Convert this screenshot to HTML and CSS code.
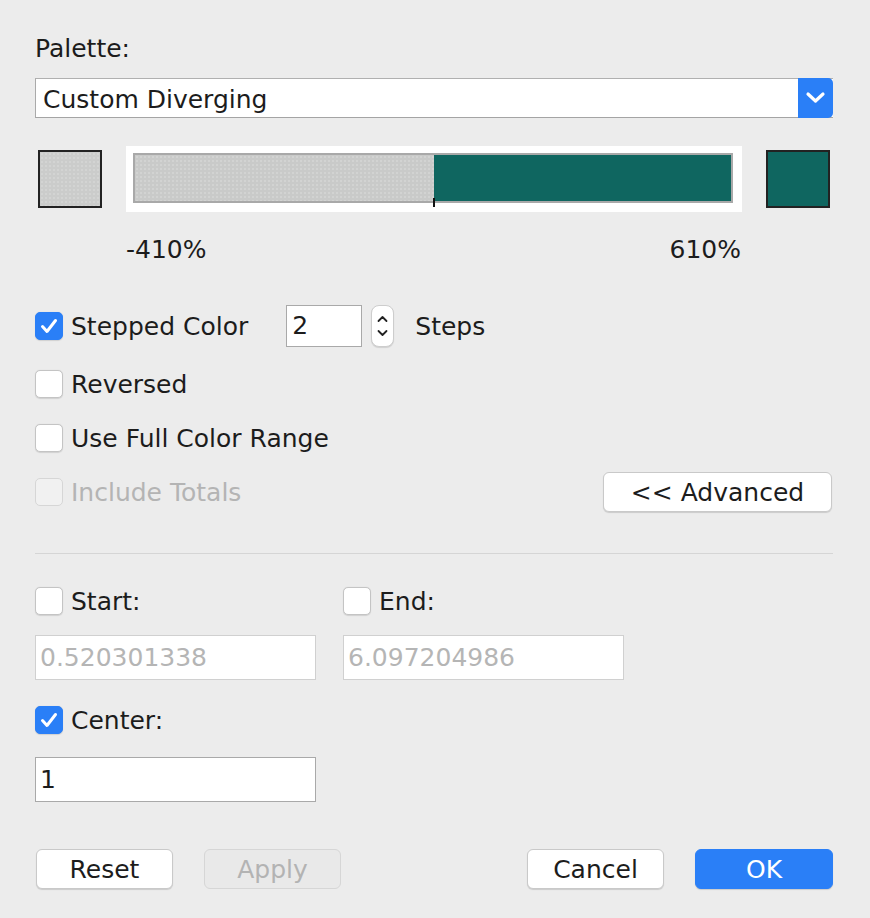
FILE: index.html
```html
<!DOCTYPE html>
<html>
<head>
<meta charset="utf-8">
<link rel="stylesheet" href="styles.css">
</head>
<body>
<div class="dialog">
  <div class="label">Palette:</div>
  <div class="select">
    <span class="select-text">Custom Diverging</span>
    <span class="select-btn">
      <svg width="35" height="40" viewBox="0 0 35 40"><polyline points="10,16 17.5,23 25,16" fill="none" stroke="#fff" stroke-width="3.2" stroke-linecap="round" stroke-linejoin="round"/></svg>
    </span>
  </div>

  <div class="gradient-row">
    <div class="swatch swatch-gray"></div>
    <div class="frame">
      <div class="bar">
        <div class="fill fill-gray"></div>
        <div class="fill fill-teal"></div>
        <div class="tick"></div>
      </div>
    </div>
    <div class="swatch swatch-teal"></div>
  </div>
  <div class="range-labels">
    <span>-410%</span>
    <span>610%</span>
  </div>

  <div class="row row-stepped">
    <span class="check checked"><svg width="28" height="28" viewBox="0 0 28 28"><polyline points="7.5,14.5 12,19.5 20.5,8.5" fill="none" stroke="#fff" stroke-width="3" stroke-linecap="round" stroke-linejoin="round"/></svg></span>
    <span class="text">Stepped Color</span>
    <div class="num-input">2</div>
    <div class="stepper">
      <svg width="23" height="42" viewBox="0 0 23 42"><polyline points="7.5,16 11.5,12 15.5,16" fill="none" stroke="#222" stroke-width="1.8" stroke-linecap="round" stroke-linejoin="round"/><polyline points="7.5,26 11.5,30 15.5,26" fill="none" stroke="#222" stroke-width="1.8" stroke-linecap="round" stroke-linejoin="round"/></svg>
    </div>
    <span class="text steps">Steps</span>
  </div>
  <div class="row row-reversed">
    <span class="check"></span>
    <span class="text">Reversed</span>
  </div>
  <div class="row row-full">
    <span class="check"></span>
    <span class="text">Use Full Color Range</span>
  </div>
  <div class="row row-include">
    <span class="check disabled"></span>
    <span class="text text-disabled">Include Totals</span>
    <button class="btn btn-advanced">&lt;&lt; Advanced</button>
  </div>

  <div class="separator"></div>

  <div class="pair-grid row-startend">
    <div class="row-inline">
      <span class="check"></span>
      <span class="text">Start:</span>
    </div>
    <div class="row-inline">
      <span class="check"></span>
      <span class="text">End:</span>
    </div>
  </div>
  <div class="pair-grid row-values">
    <div class="field field-disabled">0.520301338</div>
    <div class="field field-disabled">6.097204986</div>
  </div>
  <div class="row row-center">
    <span class="check checked"><svg width="28" height="28" viewBox="0 0 28 28"><polyline points="7.5,14.5 12,19.5 20.5,8.5" fill="none" stroke="#fff" stroke-width="3" stroke-linecap="round" stroke-linejoin="round"/></svg></span>
    <span class="text">Center:</span>
  </div>
  <div class="pair-grid row-centerval">
    <div class="field">1</div>
  </div>

  <div class="buttons">
    <div class="btn-group">
      <button class="btn">Reset</button>
      <button class="btn btn-disabled">Apply</button>
    </div>
    <div class="btn-group">
      <button class="btn">Cancel</button>
      <button class="btn btn-primary">OK</button>
    </div>
  </div>
</div>
</body>
</html>
```

FILE: styles.css
```css
* { box-sizing: border-box; }
html, body {
  margin: 0;
  padding: 0;
  background: #ececec;
}
body {
  font-family: "DejaVu Sans", Verdana, sans-serif;
  font-size: 25px;
  line-height: 29px;
  color: #1c1c1c;
  width: 870px;
  height: 918px;
  overflow: hidden;
}
.dialog {
  padding: 34px 37px 0 35px;
  display: flex;
  flex-direction: column;
}
.label { height: 29px; }

.select {
  margin-top: 15px;
  height: 40px;
  display: flex;
  background: #fff;
  border: 1px solid #aaaaaa;
  border-right: none;
  border-top-color: #b0b0b0;
  border-bottom-color: #a4a4a4;
}
.select-text {
  flex: 1;
  padding-left: 7px;
  line-height: 38px;
  padding-top: 2px;
}
.select-btn {
  width: 35px;
  height: 40px;
  margin-top: -1px;
  background: #2a7ff7;
  border-radius: 0 5px 5px 0;
  display: flex;
}

.gradient-row {
  margin-top: 28px;
  padding: 0 3px;
  display: flex;
  align-items: center;
  gap: 24px;
}
.swatch {
  width: 64px;
  height: 58px;
  border: 2px solid #222;
}
.swatch-gray {
  background-color: #cbcccb;
  background-image: radial-gradient(circle, rgba(255,255,255,0.35) 0.6px, transparent 0.8px);
  background-size: 4px 4px;
}
.swatch-teal { background: #0f6660; }
.frame {
  width: 616px;
  height: 66px;
  background: #fff;
  padding: 7px;
}
.bar {
  position: relative;
  width: 600px;
  height: 50px;
  border: 2px solid #a9a9a9;
  display: flex;
}
.fill { height: 100%; }
.fill-gray {
  width: 299px;
  background-color: #c9cac9;
  background-image: radial-gradient(circle, rgba(255,255,255,0.35) 0.6px, transparent 0.8px);
  background-size: 4px 4px;
}
.fill-teal { flex: 1; background: #0f6660; }
.tick {
  position: absolute;
  left: 298px;
  top: 43px;
  width: 2px;
  height: 9px;
  background: #111;
}
.range-labels {
  margin-top: 23px;
  padding: 0 92px 0 91px;
  display: flex;
  justify-content: space-between;
  height: 29px;
}

.row {
  display: flex;
  align-items: center;
}
.check {
  width: 28px;
  height: 28px;
  flex: none;
  border-radius: 5px;
  background: #fff;
  border: 1px solid #c4c4c4;
  box-shadow: 0 0.5px 1px rgba(0,0,0,0.12);
  display: flex;
}
.check.checked {
  background: #2a7ff7;
  border-color: #2a7ff7;
}
.check.checked svg { margin: -1px; }
.check.disabled {
  background: #f1f1f1;
  border-color: #d6d6d6;
  box-shadow: none;
}
.text { margin-left: 8px; white-space: nowrap; }
.text-disabled { color: #b4b4b4; }

.row-stepped { margin-top: 41px; height: 42px; }
.num-input {
  margin-left: 38px;
  width: 76px;
  height: 42px;
  background: #fff;
  border: 1px solid #a9a9a9;
  padding-left: 5px;
  line-height: 40px;
}
.stepper {
  margin-left: 9px;
  width: 23px;
  height: 42px;
  background: #fff;
  border: 1px solid #cdcdcd;
  border-radius: 8px;
  box-shadow: 0 1px 1px rgba(0,0,0,0.12);
  display: flex;
  align-items: center;
  justify-content: center;
}
.stepper svg { flex: none; }
.steps { margin-left: 21px; }

.row-reversed { margin-top: 23px; height: 28px; }
.row-full { margin-top: 26px; height: 28px; }
.row-include { margin-top: 20px; height: 40px; }

.btn {
  font-family: inherit;
  font-size: 25px;
  line-height: 29px;
  color: #1c1c1c;
  width: 137px;
  height: 40px;
  padding: 0;
  background: #fff;
  border: 1px solid #c9c9c9;
  border-radius: 6px;
  box-shadow: 0 1px 1px rgba(0,0,0,0.14);
}
.btn-advanced {
  margin-left: auto;
  margin-right: 1px;
  width: 229px;
}
.btn-disabled {
  background: #e9e9e9;
  color: #b3b3b3;
  border-color: #d6d6d6;
  box-shadow: none;
}
.btn-primary {
  background: #2a7ff7;
  border-color: #2a7ff7;
  color: #fff;
  width: 138px;
}

.separator {
  margin-top: 41px;
  height: 1px;
  background: #d5d5d5;
}

.pair-grid {
  display: grid;
  grid-template-columns: 281px 281px;
  column-gap: 27px;
}
.row-inline {
  display: flex;
  align-items: center;
  height: 28px;
}
.row-startend { margin-top: 33px; }
.row-values { margin-top: 20px; }
.field {
  height: 45px;
  background: #fff;
  border: 1px solid #a9a9a9;
  padding-left: 4px;
  line-height: 43px;
}
.field-disabled {
  border-color: #d0d0d0;
  color: #b5b5b5;
}
.row-center { margin-top: 26px; height: 28px; }
.row-centerval { margin-top: 23px; }

.buttons {
  margin-top: 47px;
  display: flex;
  justify-content: space-between;
  padding-left: 1px;
}
.btn-group {
  display: flex;
  gap: 31px;
}
```
